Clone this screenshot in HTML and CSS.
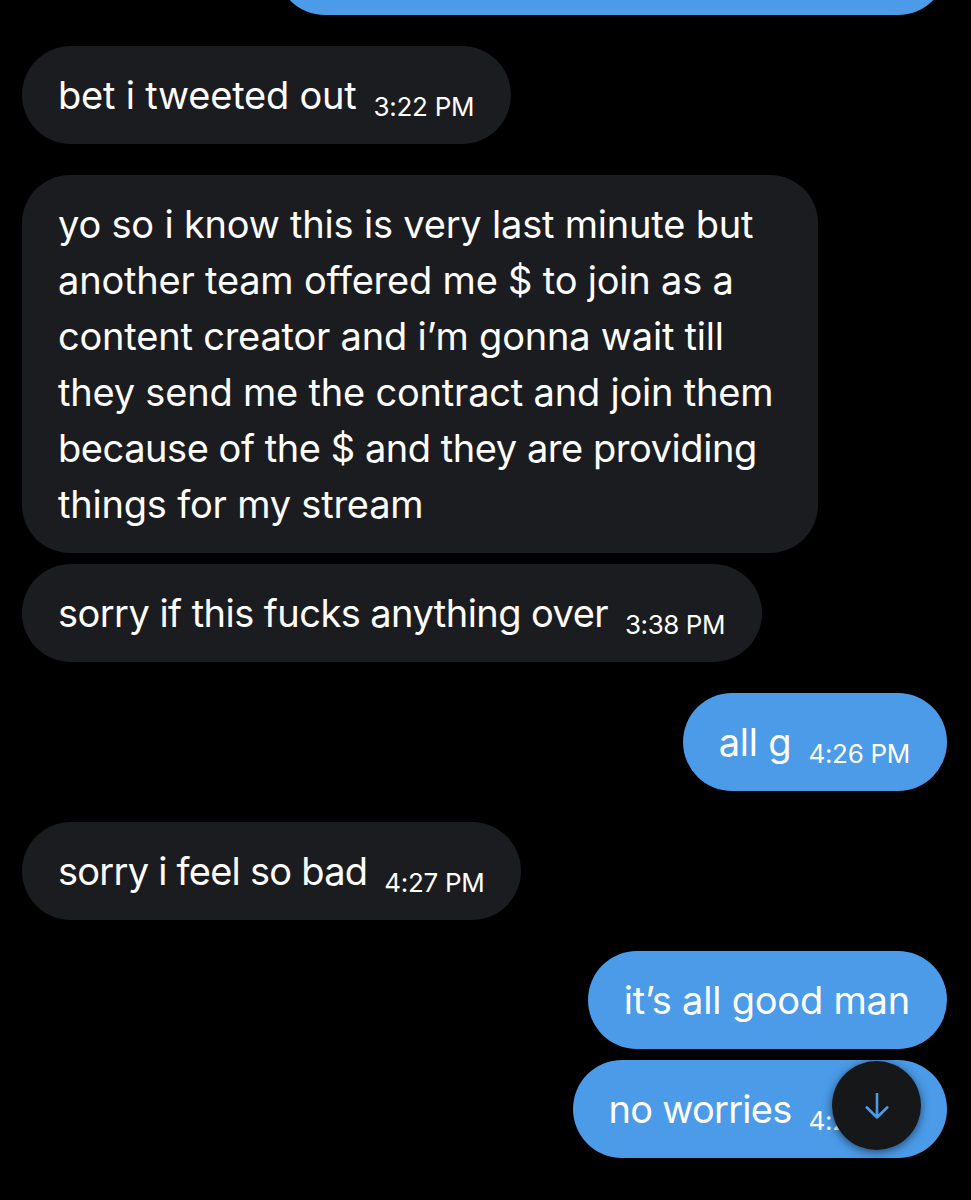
FILE: index.html
```html
<!DOCTYPE html>
<html lang="en">
<head>
<meta charset="utf-8">
<title>Messages</title>
<link rel="stylesheet" href="styles.css">
</head>
<body>
<main class="thread">
  <div class="row row-out">
    <div class="bubble bubble-out bubble-cut"></div>
  </div>

  <div class="row row-in">
    <div class="bubble bubble-in"><span class="text">bet i tweeted out</span><time class="time">3:22 PM</time></div>
  </div>

  <div class="group">
    <div class="row row-in">
      <div class="bubble bubble-in bubble-wide"><span class="text">yo so i know this is very last minute but<br>another team offered me $ to join as a<br>content creator and i’m gonna wait till<br>they send me the contract and join them<br><span class="tighter">because of the $ and they are providing</span><br>things for my stream</span></div>
    </div>
    <div class="row row-in">
      <div class="bubble bubble-in"><span class="text semi-tight">sorry if this fucks anything over</span><time class="time time-tight">3:38 PM</time></div>
    </div>
  </div>

  <div class="row row-out">
    <div class="bubble bubble-out"><span class="text">all g</span><time class="time">4:26 PM</time></div>
  </div>

  <div class="row row-in">
    <div class="bubble bubble-in"><span class="text tight">sorry i feel so bad</span><time class="time">4:27 PM</time></div>
  </div>

  <div class="group">
    <div class="row row-out">
      <div class="bubble bubble-out"><span class="text">it’s all good man</span></div>
    </div>
    <div class="row row-out">
      <div class="bubble bubble-out"><span class="text tight">no worries</span><time class="time">4:28 PM</time></div>
    </div>
  </div>

  <button class="scroll-down" type="button" aria-label="Scroll to bottom">
    <svg viewBox="0 0 24 26" width="24" height="26" aria-hidden="true">
      <path d="M12 1 V24.5 M1.8 14.5 L12 24.5 L22.2 14.5" fill="none" stroke="currentColor" stroke-width="2.6" stroke-linecap="round" stroke-linejoin="round"/>
    </svg>
  </button>
</main>
</body>
</html>
```

FILE: styles.css
```css
html, body {
  margin: 0;
  padding: 0;
  background: #000;
}

body {
  width: 971px;
  height: 1200px;
  overflow: hidden;
  font-family: Inter, "Noto Sans", "Liberation Sans", sans-serif;
  color: #fff;
}

.thread {
  position: relative;
  display: flex;
  flex-direction: column;
  gap: 31px;
  padding: 0 24px 0 22px;
}

.group {
  display: flex;
  flex-direction: column;
  gap: 11px;
}

.row {
  display: flex;
}

.row-in {
  justify-content: flex-start;
}

.row-out {
  justify-content: flex-end;
}

.bubble {
  box-sizing: border-box;
  border-radius: 49px;
  padding: 21px 37px 21px 36px;
  font-size: 38px;
  line-height: 56px;
  letter-spacing: -0.2px;
  white-space: nowrap;
}

.bubble-in {
  background: #1b1c1f;
}

.bubble-out {
  background: #4b9be9;
}

.bubble-cut {
  width: 671px;
  height: 98px;
  margin-top: -83px;
}

.bubble-wide {
  width: 796px;
  border-radius: 48px;
}

.tight {
  letter-spacing: -0.75px;
}

.semi-tight {
  letter-spacing: -0.55px;
}

.tighter {
  letter-spacing: -0.45px;
}

.time {
  display: inline-block;
  margin-left: 17px;
  font-size: 26px;
  line-height: 26px;
  letter-spacing: -0.3px;
  vertical-align: -7px;
}

.time-tight {
  letter-spacing: -0.45px;
}

.scroll-down {
  position: absolute;
  left: 832px;
  top: 1061px;
  width: 89px;
  height: 89px;
  padding: 0;
  border: 0;
  border-radius: 50%;
  background: #161718;
  color: #4b9be9;
  box-shadow: 0 2px 10px rgba(0, 0, 0, 0.55);
  display: flex;
  align-items: center;
  justify-content: center;
}

.scroll-down svg {
  display: block;
}
```
